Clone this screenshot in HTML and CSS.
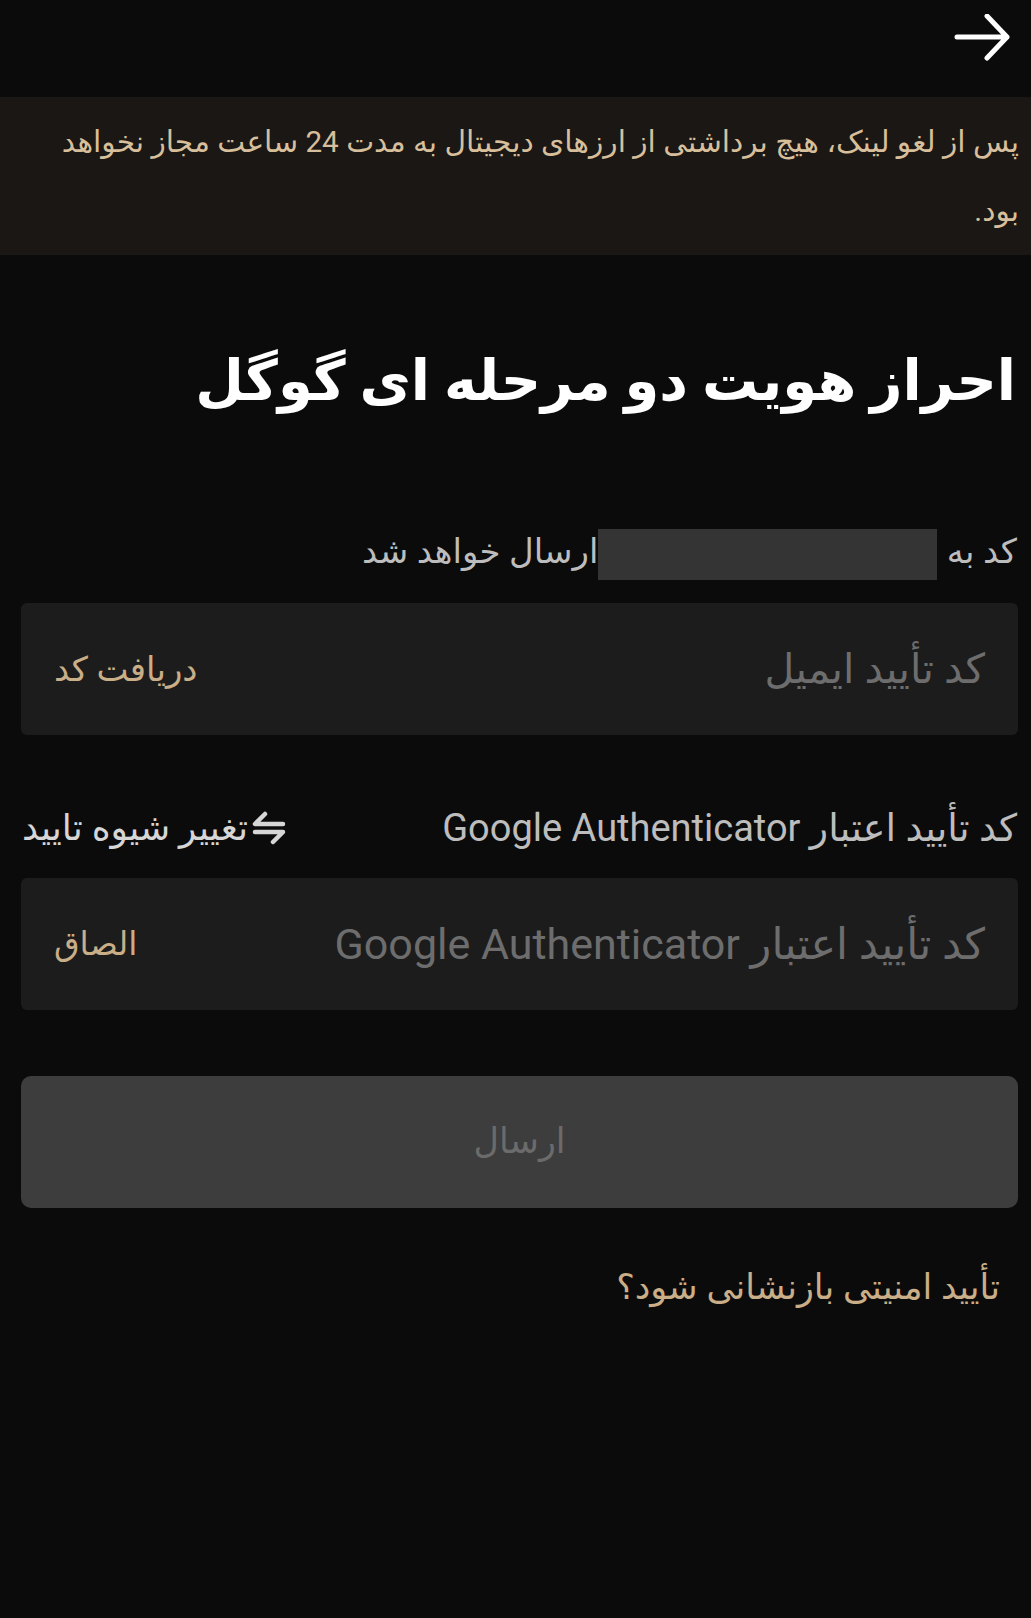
FILE: index.html
```html
<!DOCTYPE html>
<html lang="fa">
<head>
<meta charset="utf-8">
<link rel="stylesheet" href="styles.css">
</head>
<body>
<div class="page">
  <header class="topbar">
    <svg class="back" width="56" height="48" viewBox="0 0 56 48">
      <path d="M3 23 H53 M33 2 L53 23 L33 44" fill="none" stroke="#ffffff" stroke-width="5" stroke-linecap="round" stroke-linejoin="round"/>
    </svg>
  </header>
  <div class="banner">پس از لغو لینک، هیچ برداشتی از ارزهای دیجیتال به مدت 24 ساعت مجاز نخواهد بود.</div>
  <main class="content">
    <h1 class="title">احراز هویت دو مرحله ای گوگل</h1>
    <p class="label">کد به <span class="redact"></span>ارسال خواهد شد</p>
    <div class="field">
      <span class="placeholder">کد تأیید ایمیل</span>
      <span class="action">دریافت کد</span>
    </div>
    <div class="label-row">
      <span class="label2">کد تأیید اعتبار Google Authenticator</span>
      <span class="switch">
        <svg class="swap" width="36" height="34" viewBox="0 0 36 34">
          <path d="M14 3 L4 13 H32 M4 21 H32 L22 31" fill="none" stroke="#d6d6d6" stroke-width="4.5" stroke-linecap="round" stroke-linejoin="round"/>
        </svg>تغییر شیوه تایید</span>
    </div>
    <div class="field">
      <span class="placeholder big">کد تأیید اعتبار Google Authenticator</span>
      <span class="action small">الصاق</span>
    </div>
    <button class="submit">ارسال</button>
    <p class="reset">تأیید امنیتی بازنشانی شود؟</p>
  </main>
</div>
</body>
</html>
```
FILE: styles.css
```css
html, body {
  margin: 0;
  padding: 0;
  background: #0b0b0b;
}
body {
  font-family: Roboto, "DejaVu Sans", sans-serif;
  color: #ffffff;
}
.page {
  width: 1031px;
  min-height: 1618px;
  direction: rtl;
}
.topbar {
  height: 97px;
  display: flex;
  align-items: flex-start;
  padding: 14px 21px 0 0;
  box-sizing: border-box;
}
.back {
  display: block;
}
.banner {
  background: #1a1714;
  color: #d8bf9b;
  font-size: 29.7px;
  line-height: 69px;
  padding: 10px 12px 10px 21px;
  text-align: right;
}
.content {
  padding: 0 13px 0 21px;
}
.title {
  margin: 86px 2px 0 0;
  font-size: 56px;
  font-weight: bold;
  line-height: 80px;
  color: #ffffff;
}
.label {
  margin: 104px 1px 0 0;
  font-size: 34px;
  line-height: 52px;
  color: #bdbdbd;
}
.redact {
  display: inline-block;
  width: 339px;
  height: 51px;
  background: #343434;
  vertical-align: middle;
  margin: 0 1px 0 0;
}
.field {
  margin-top: 23px;
  height: 132px;
  background: #1c1c1c;
  border-radius: 6px;
  display: flex;
  align-items: center;
  justify-content: space-between;
  padding: 0 33px;
}
.placeholder {
  color: #6d6d6d;
  font-size: 41px;
}
.placeholder.big {
  font-size: 43px;
}
.action {
  color: #c9ae88;
  font-size: 34px;
}
.action.small {
  font-size: 33px;
}
.label-row {
  margin-top: 66px;
  display: flex;
  justify-content: space-between;
  align-items: center;
  height: 54px;
  padding-right: 1px;
}
.label2 {
  color: #bdbdbd;
  font-size: 38px;
}
.switch {
  display: flex;
  align-items: center;
  color: #d6d6d6;
  font-size: 36px;
  margin-left: 1px;
}
.swap {
  display: block;
  margin-left: 3px;
}
.submit {
  display: block;
  width: 100%;
  margin-top: 66px;
  height: 132px;
  border: 0;
  border-radius: 10px;
  background: #3d3d3d;
  color: #6b6b6b;
  font-family: Roboto, "DejaVu Sans", sans-serif;
  font-size: 35px;
}
.reset {
  margin: 55px 18px 0 0;
  font-size: 35px;
  line-height: 50px;
  color: #c9ae88;
}
```
